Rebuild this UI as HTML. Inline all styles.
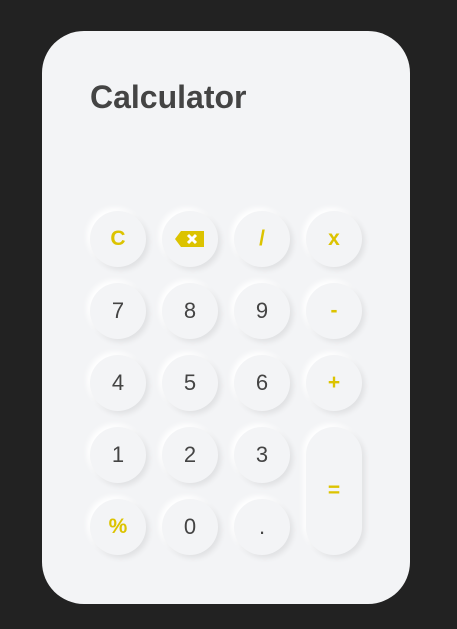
<!DOCTYPE html>
<html><head><style>
html,body{margin:0;background:#222222;width:457px;height:629px;overflow:hidden;font-family:"Liberation Sans",sans-serif}
.card{position:absolute;left:42px;top:31px;width:368px;height:573px;background:#f3f4f6;border-radius:42px}
h1{position:absolute;left:48px;top:48px;margin:0;font-size:32px;font-weight:bold;color:#444}
.b{position:absolute;width:56px;height:56px;border-radius:28px;background:#f3f4f6;box-shadow:3px 3px 6px rgba(0,0,0,0.08),-3px -3px 6px #fff;display:flex;align-items:center;justify-content:center;font-size:22px;color:#444}
.y{color:#dcc300;font-weight:bold;font-size:21px}
</style></head><body>
<div class="card">
<h1>Calculator</h1>
</div>
<div class="b y" style="left:90px;top:211px">C</div>
<div class="b y" style="left:162px;top:211px"><svg width="32" height="18" viewBox="0 0 32 18"><path d="M7 1H30V17H7L1 9Z" fill="#dcc300"/><path d="M14 5L22 13M22 5L14 13" stroke="#fff" stroke-width="3"/></svg></div>
<div class="b y" style="left:234px;top:211px">/</div>
<div class="b y" style="left:306px;top:211px">x</div>
<div class="b" style="left:90px;top:283px">7</div>
<div class="b" style="left:162px;top:283px">8</div>
<div class="b" style="left:234px;top:283px">9</div>
<div class="b y" style="left:306px;top:283px">-</div>
<div class="b" style="left:90px;top:355px">4</div>
<div class="b" style="left:162px;top:355px">5</div>
<div class="b" style="left:234px;top:355px">6</div>
<div class="b y" style="left:306px;top:355px">+</div>
<div class="b" style="left:90px;top:427px">1</div>
<div class="b" style="left:162px;top:427px">2</div>
<div class="b" style="left:234px;top:427px">3</div>
<div class="b y" style="left:306px;top:427px;height:128px">=</div>
<div class="b y" style="left:90px;top:499px">%</div>
<div class="b" style="left:162px;top:499px">0</div>
<div class="b" style="left:234px;top:499px">.</div>
</body></html>
